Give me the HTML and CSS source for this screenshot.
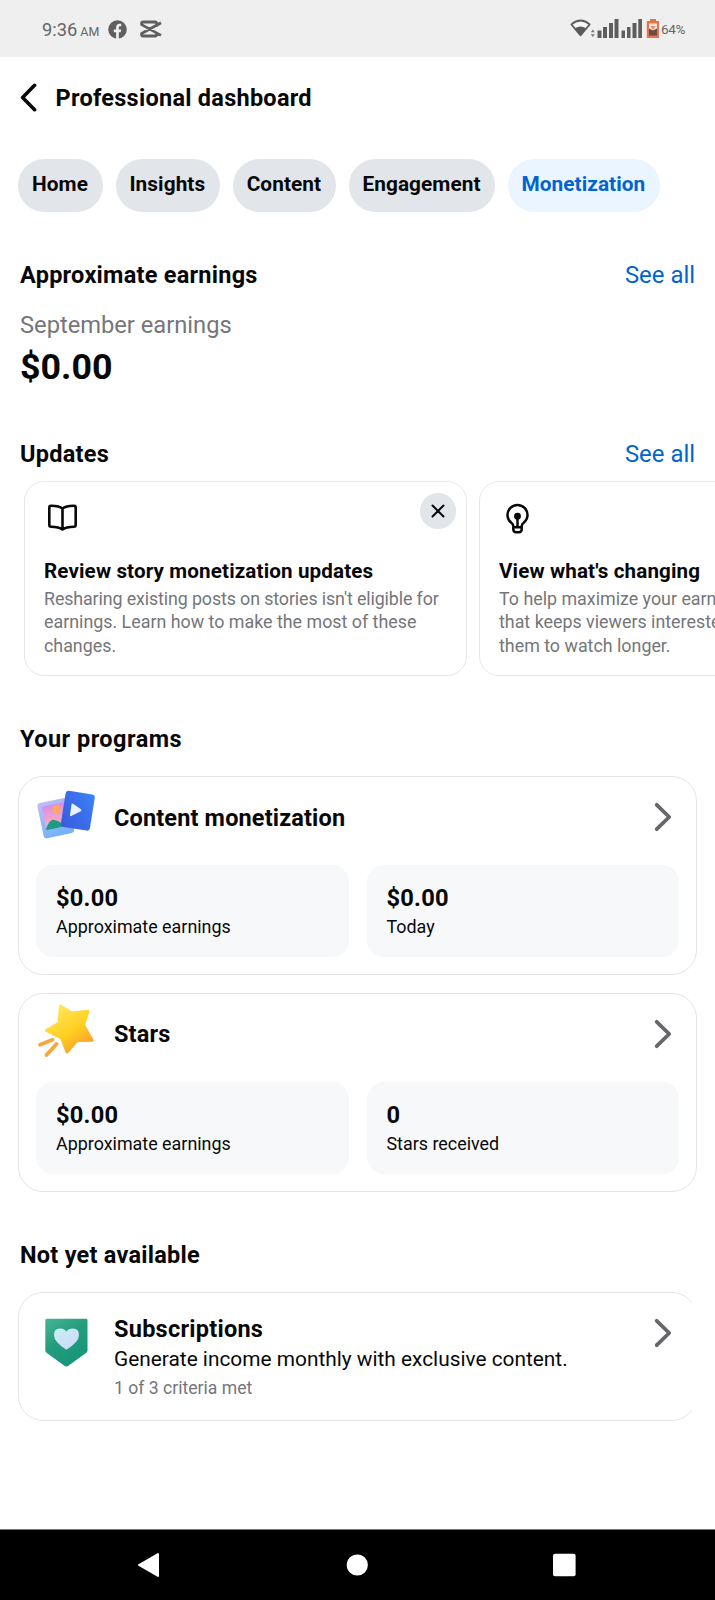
FILE: index.html
```html
<!DOCTYPE html>
<html lang="en">
<head>
<meta charset="utf-8">
<title>Professional dashboard</title>
<link rel="stylesheet" href="styles.css">
</head>
<body>
<div class="screen">
  <div class="status">
    <span class="time">9:36</span><span class="ampm">AM</span>
    <svg class="st-fb" width="19" height="19" viewBox="0 0 19 19"><circle cx="9.5" cy="9.5" r="9.3" fill="#5f5f5f"/><path d="M8.100 19v-6.700H5.800V9.400h2.300V7.700c0-2.600 1.300-3.900 3.600-3.900.6 0 1.100.1 1.500.2v2.300h-1c-1 0-1.400.5-1.400 1.400v1.700h2.400l-.5 2.900h-1.900V19z" fill="#efefef"/></svg>
    <svg class="st-cut" width="22" height="18" viewBox="0 0 22 18" fill="none" stroke="#5f5f5f" stroke-width="2.800" stroke-linejoin="round"><path d="M21 2.800 16.500 5.500V3.200Q16.500 2 15.300 2H3Q1.600 2 1.600 3.300V4.600L21 15.400M21 2.800 1.600 13.400V14.700Q1.600 16 3 16H15.300Q16.500 16 16.500 14.800V13"/></svg>
    <span class="grow"></span>
    <svg class="st-sys" width="89" height="22" viewBox="0 0 89 22">
      <path d="M1.400 6.400Q10.500-1.400 19.700 6.400L10.500 17.400z" fill="#f7f7f7" stroke="#5f5f5f" stroke-width="1.700" stroke-linejoin="round"/>
      <path d="M5 10.300Q10.500 6.500 16 10.300L10.500 17.700z" fill="#5a5a5a"/>
      <path d="M20.800 14.300 22.800 11.500 24.800 14.300zM20.800 16.300h4L22.800 19z" fill="#777"/>
      <path d="M27.500 12.500h4V20h-4zM33 9h4V20h-4zM39 5h4V20h-4zM44.500 1h4V20h-4zM51.500 12.500h3.500V20h-3.500zM57 9h3.500V20H57zM62.500 5h4V20h-4zM68.300 1h3.700V20h-3.700z" fill="#5e5e5e"/>
      <path d="M80 1h6v2h3V20H76.800V3H80z" fill="#e0744a"/><path d="M79 5.500h8v8h-8z" fill="#f9e3d8"/><path d="M79 10.500l4 2 4-2V17.500h-8z" fill="#6a4a42"/><path d="M80.500 8h5L83 12z" fill="#e98b66"/>
    </svg>
    <span class="batt">64%</span>
  </div>

  <div class="header">
    <svg class="back" width="17" height="29" viewBox="0 0 17 29"><path d="M14.600 2.300 2.600 14.500 14.600 26.700" fill="none" stroke="#080809" stroke-width="3.600" stroke-linecap="round" stroke-linejoin="round"/></svg>
    <h1 class="title">Professional dashboard</h1>
  </div>

  <div class="chips">
    <span class="chip chip-home">Home</span><span class="chip chip-insights">Insights</span><span class="chip chip-content">Content</span><span class="chip chip-engagement">Engagement</span><span class="chip chip-active">Monetization</span>
  </div>

  <div class="section-row first"><h2 class="heading">Approximate earnings</h2><a class="link">See all</a></div>
  <div class="month">September earnings</div>
  <div class="amount">$0.00</div>

  <div class="section-row updates-row"><h2 class="heading">Updates</h2><a class="link">See all</a></div>
  <div class="carousel">
    <div class="update">
      <div class="update-top">
        <svg width="32" height="30" viewBox="0 0 32 30" fill="none" stroke="#080809" stroke-width="2.600" stroke-linejoin="round" stroke-linecap="round"><path d="M15.500 5.600Q12 2.600 4 2.700Q2.300 2.800 2.300 4.500V22Q2.300 23.700 4 23.700Q12 23.700 15.500 26.500Q19 23.700 27 23.700Q28.700 23.700 28.700 22V4.500Q28.700 2.800 27 2.700Q19 2.600 15.500 5.600V26"/></svg>
        <span class="close"><svg width="14" height="14" viewBox="0 0 14 14"><path d="M1.500 1.500l11 11M12.500 1.500l-11 11" stroke="#080809" stroke-width="2" stroke-linecap="round"/></svg></span>
      </div>
      <h3 class="update-title">Review story monetization updates</h3>
      <p class="update-text"><span class="tight">Resharing existing posts on stories isn't eligible for</span><br>earnings. Learn how to make the most of these<br>changes.</p>
    </div>
    <div class="update">
      <div class="update-top">
        <svg width="32" height="32" viewBox="0 0 32 32" fill="none" stroke="#080809" stroke-width="2.500" stroke-linejoin="round" stroke-linecap="round"><path d="M11.300 23.800V23Q11 21 9.300 19.800A10 10 0 1 1 21.700 19.800Q20 21 19.700 23V23.800M15.500 14V23.500M11.300 24.300H19.700V26Q19.700 29.200 17 29.200H14Q11.300 29.200 11.300 26z"/><circle cx="15.500" cy="13.300" r="2.200" fill="#080809"/></svg>
      </div>
      <h3 class="update-title">View what's changing</h3>
      <p class="update-text">To help maximize your earnings<br>that keeps viewers interested<br>them to watch longer.</p>
    </div>
  </div>

  <div class="section-row programs-row"><h2 class="heading wide">Your programs</h2></div>
  <div class="program">
    <div class="program-head">
      <svg class="art" width="60" height="60" viewBox="0 0 60 60">
        <defs>
          <linearGradient id="photo" x1="0" y1="0" x2=".3" y2="1"><stop offset="0" stop-color="#c3bdf8"/><stop offset="1" stop-color="#75b2fb"/></linearGradient>
          <linearGradient id="sky" x1="0" y1="0" x2="0" y2="1"><stop offset="0" stop-color="#d98be8"/><stop offset=".65" stop-color="#f5a6c7"/><stop offset="1" stop-color="#b8c8f5"/></linearGradient>
          <linearGradient id="video" x1="1" y1="0" x2="0" y2="1"><stop offset="0" stop-color="#3b84f7"/><stop offset=".5" stop-color="#3a6ce9"/><stop offset="1" stop-color="#3b5bdd"/></linearGradient>
        </defs>
        <g transform="rotate(-12 20 34)"><rect x="4" y="17" width="31" height="36" rx="3" fill="url(#photo)"/><rect x="8" y="21" width="24" height="24" rx="3" fill="url(#sky)"/><circle cx="22" cy="26.500" r="4" fill="#ffab5c"/><path d="M8 45V43Q14 34.500 17.500 36.500Q22 38 26 43.500V45z" fill="#219a83"/></g>
        <g transform="rotate(9 42 28)"><rect x="27" y="9.500" width="29.500" height="36.500" rx="3" fill="url(#video)"/></g>
        <path d="M35.500 21.500Q35.500 20 37 20.800L45 26.300Q46 27.500 44.800 28.300L35.300 33Q33.800 33.500 34 32z" fill="#e6f2ff"/>
      </svg>
      <h2 class="heading">Content monetization</h2>
      <svg class="chev" width="18" height="30" viewBox="0 0 18 30"><path d="M2.700 2.800 15.200 15 2.700 27.200" fill="none" stroke="#65676b" stroke-width="3.800" stroke-linecap="round" stroke-linejoin="round"/></svg>
    </div>
    <div class="stats">
      <div class="stat"><div class="value">$0.00</div><div class="label">Approximate earnings</div></div>
      <div class="stat"><div class="value">$0.00</div><div class="label">Today</div></div>
    </div>
  </div>
  <div class="program">
    <div class="program-head">
      <svg class="art" width="60" height="60" viewBox="0 0 60 60">
        <defs><linearGradient id="star" x1=".2" y1="0" x2=".8" y2="1"><stop offset="0" stop-color="#ffe75a"/><stop offset=".55" stop-color="#ffd022"/><stop offset="1" stop-color="#f79a2e"/></linearGradient></defs>
        <path d="M24.500 6 35.500 13 52 11.200 47.500 25 56 40.300 41 40.500 31 52 25.500 38 10.500 30.500 23 23z" fill="url(#star)" stroke="url(#star)" stroke-width="3" stroke-linejoin="round"/>
        <path d="M4 44.700 16.500 39.800M10.500 55 20.500 44" stroke="#f5a83c" stroke-width="3.800" stroke-linecap="round"/>
      </svg>
      <h2 class="heading">Stars</h2>
      <svg class="chev" width="18" height="30" viewBox="0 0 18 30"><path d="M2.700 2.800 15.200 15 2.700 27.200" fill="none" stroke="#65676b" stroke-width="3.800" stroke-linecap="round" stroke-linejoin="round"/></svg>
    </div>
    <div class="stats">
      <div class="stat"><div class="value">$0.00</div><div class="label">Approximate earnings</div></div>
      <div class="stat"><div class="value">0</div><div class="label">Stars received</div></div>
    </div>
  </div>

  <div class="section-row locked-row"><h2 class="heading">Not yet available</h2></div>
  <div class="locked-clip">
    <div class="locked">
      <svg width="60" height="60" viewBox="0 0 60 60">
        <defs>
          <linearGradient id="shield" x1="0" y1="0" x2=".6" y2="1"><stop offset="0" stop-color="#46b596"/><stop offset=".5" stop-color="#239c7c"/><stop offset="1" stop-color="#16967a"/></linearGradient>
          <linearGradient id="heart" x1="0" y1="0" x2="1" y2="1"><stop offset="0" stop-color="#c8f0f4"/><stop offset="1" stop-color="#cfd6f6"/></linearGradient>
        </defs>
        <path d="M9.300 7.200Q9.300 5.700 10.800 5.700H50Q51.500 5.700 51.500 7.200V37.500Q51.500 39 50.300 39.800L32.400 52.800Q30.400 54 28.400 52.800L10.500 39.800Q9.300 39 9.300 37.500z" fill="url(#shield)"/>
        <path d="M30.400 36.800Q18 29 18 22Q18 15.600 24 15.600Q28.500 15.600 30.400 18.500Q32.300 15.600 37 15.600Q43 15.600 43 22Q43 29 30.400 36.800z" fill="url(#heart)"/>
      </svg>
      <div class="locked-body">
        <h2 class="heading">Subscriptions</h2>
        <div class="desc">Generate income monthly with exclusive content.</div>
        <div class="criteria">1 of 3 criteria met</div>
      </div>
      <svg class="chev" width="18" height="30" viewBox="0 0 18 30"><path d="M2.700 2.800 15.200 15 2.700 27.200" fill="none" stroke="#65676b" stroke-width="3.800" stroke-linecap="round" stroke-linejoin="round"/></svg>
    </div>
  </div>

  <div class="navbar">
    <svg width="24" height="26" viewBox="0 0 24 26"><path d="M21 2V24L2 13z" fill="#fff" stroke="#fff" stroke-width="2" stroke-linejoin="round"/></svg>
    <svg width="24" height="24" viewBox="0 0 24 24"><circle cx="12.300" cy="12" r="10.600" fill="#fff"/></svg>
    <svg width="24" height="24" viewBox="0 0 24 24"><rect x="0" y=".8" width="22.600" height="22.400" rx="2" fill="#fff"/></svg>
  </div>
</div>
</body>
</html>
```
FILE: styles.css
```css
* { box-sizing: border-box; }
body { margin: 0; font-family: Roboto, "Liberation Sans", sans-serif; color: #080809; background: #fff; }
h1, h2, h3, p { margin: 0; }
svg { display: block; flex: none; }
.screen { width: 715px; height: 1600px; display: flex; flex-direction: column; overflow: hidden; background: #fff; white-space: nowrap; }

.status { flex: none; height: 57px; background: #efefef; display: flex; align-items: center; padding: 1px 29px 0 42px; color: #666; }
.time { font-size: 18.300px; }
.ampm { font-size: 12.500px; margin: 4px 0 0 3px; }
.st-fb { margin-left: 9px; }
.st-cut { margin-left: 13px; }
.grow { flex: 1; }
.st-sys { margin-right: 2px; }
.batt { font-size: 13.600px; width: 25px; letter-spacing: -0.400px; }

.header { flex: none; height: 102px; padding: 24px 0 44px 20px; display: flex; align-items: center; }
.back { margin-top: -1px; }
.title { margin-left: 18.500px; font-size: 23.500px; font-weight: 700; line-height: 30px; letter-spacing: 0.260px; }

.chips { flex: none; display: flex; gap: 12.600px; padding-left: 18px; }
.chip { height: 53px; line-height: 51.500px; border-radius: 27px; background: #e2e5e9; font-size: 20.800px; font-weight: 700; text-align: center; text-indent: -1px; letter-spacing: 0.080px; }
.chip-home { width: 85px; }
.chip-insights { width: 104.500px; }
.chip-content { width: 103.500px; }
.chip-engagement { width: 146.500px; }
.chip-active { width: 152px; background: #ebf5ff; color: #0064d1; }

.section-row { flex: none; display: flex; justify-content: space-between; padding: 0 20px; height: 30px; }
.heading { font-size: 23.500px; font-weight: 700; line-height: 30px; letter-spacing: 0.250px; }
.wide { letter-spacing: 0.460px; }
.program-head .heading { letter-spacing: 0.150px; }
.link { font-size: 23.900px; line-height: 30px; color: #0064d1; }
.first { margin-top: 48px; }
.month { margin: 20px 0 0 20px; font-size: 23.700px; line-height: 30px; color: #74767a; }
.amount { margin: 7px 0 0 20px; font-size: 35.800px; font-weight: 700; line-height: 40px; }
.updates-row { margin-top: 51.500px; }

.carousel { flex: none; display: flex; gap: 12px; padding-left: 24px; margin-top: 12.500px; overflow: hidden; }
.update { flex: none; width: 443px; height: 195px; border: 1.500px solid #e6e7e9; border-radius: 20px; padding: 0 10px 0 19px; }
.update-top { height: 74px; padding: 11px 0 0 3px; display: flex; justify-content: space-between; }
.update-top > svg { margin-top: 10px; }
.close { width: 36px; height: 36px; border-radius: 50%; background: #e2e5e9; display: flex; align-items: center; justify-content: center; }
.update-title { font-size: 20.600px; font-weight: 700; line-height: 30px; letter-spacing: 0.140px; }
.update-text { margin-top: 0.500px; font-size: 17.850px; line-height: 23.700px; color: #74767a; }
.tight { letter-spacing: -0.120px; }

.programs-row { margin-top: 48px; margin-bottom: 22px; }
.program { flex: none; height: 199px; width: 679px; margin: 0 0 17.500px 18px; border: 1px solid #e4e5e8; border-radius: 25px; padding: 11px 17px 0; }
.program-head { height: 60px; display: flex; align-items: center; }
.program-head .heading { margin: -1px auto 0 18px; }
.art { margin-top: -10px; }
.chev { margin: -2px 7.500px 0 0; }
.stats { display: grid; grid-template-columns: 1fr 1fr; gap: 18px; margin-top: 17px; }
.stat { height: 92px; border-radius: 17px; background: #f7f8fa; padding: 18px 0 0 20px; }
.value { font-size: 23.700px; font-weight: 700; line-height: 30px; letter-spacing: 0.200px; }
.label { font-size: 17.900px; line-height: 28px; }

.locked-row { margin: 30.500px 0 22px; }
.locked-clip { flex: none; width: 692px; overflow: hidden; padding-left: 18px; }
.locked { width: 679px; height: 129px; border: 1px solid #e4e5e8; border-radius: 25px; display: flex; align-items: flex-start; padding: 20px 17px 0; }
.locked-body { margin: 1px auto 0 18px; }
.desc { font-size: 20.850px; line-height: 31px; }
.criteria { font-size: 17.600px; line-height: 26px; color: #74767a; }
.locked .chev { margin-top: 5px; }

.navbar { flex: none; height: 71px; margin-top: auto; background: #000; border-top: 1px solid #777; display: grid; grid-template-columns: 298px 118px 298px; justify-items: center; align-items: center; }
```
